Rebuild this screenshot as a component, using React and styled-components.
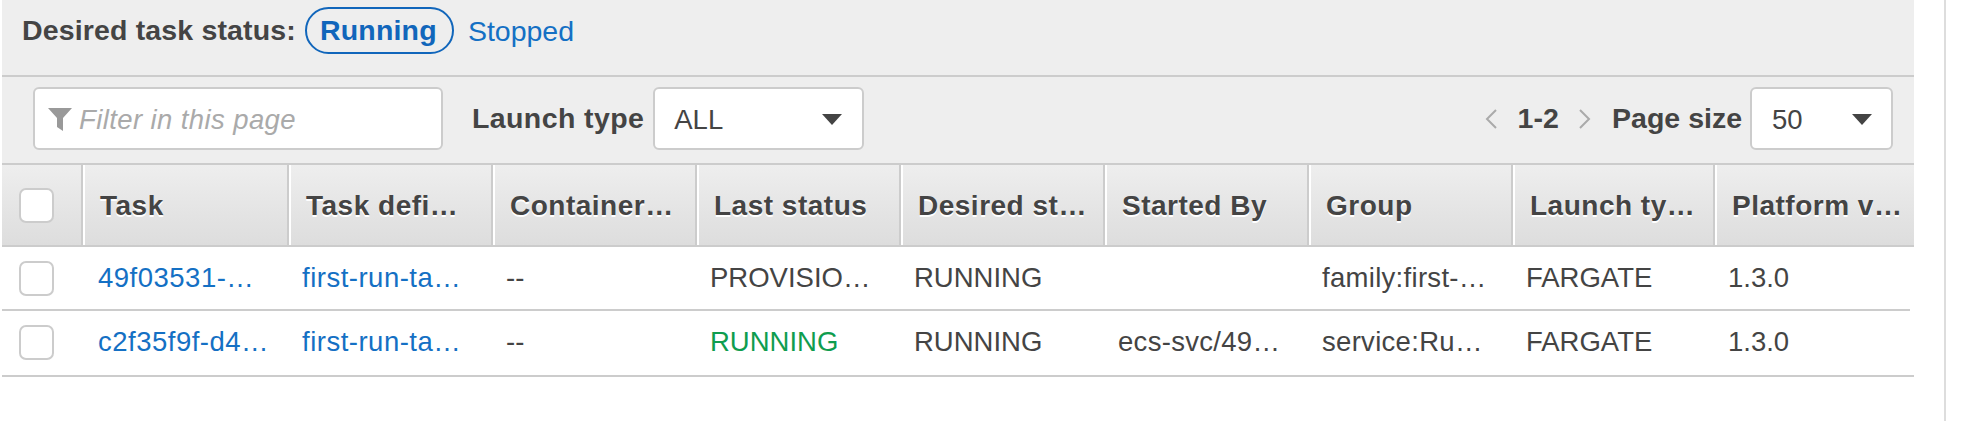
import React from "react";
import styled, { createGlobalStyle } from "styled-components";

const GlobalStyle = createGlobalStyle`
  html, body { margin: 0; background: #fff; }
  body { font-family: "Liberation Sans", Arial, sans-serif; color: #444; }
`;

const Page = styled.div`
  display: flex;
  height: 421px;
  padding-left: 2px;
  box-sizing: border-box;
  overflow: hidden;
`;

const Panel = styled.div`
  width: 1912px;
  flex: none;
`;

const Rail = styled.div`
  width: 2px;
  margin-left: 30px;
  background: #ddd;
`;

const StatusBar = styled.div`
  display: flex;
  align-items: center;
  height: 61px;
  padding: 0 0 14px 20px;
  background: #eee;
  border-bottom: 2px solid #ccc;
`;

const BoldLabel = styled.span`
  font-size: 28.5px;
  font-weight: 700;
  letter-spacing: 0.15px;
  color: #444;
  white-space: nowrap;
`;

const StatusPill = styled.span`
  display: flex;
  align-items: center;
  justify-content: center;
  box-sizing: border-box;
  width: 149px;
  height: 47px;
  margin: 0 14px 0 9px;
  padding-right: 2px;
  border: 2px solid #1166bb;
  border-radius: 24px;
  font-size: 28.5px;
  font-weight: 700;
  letter-spacing: 0.2px;
  color: #1166bb;
`;

const StatusLink = styled.a`
  padding-top: 1px;
  font-size: 28.5px;
  color: #1470c4;
`;

const Toolbar = styled.div`
  display: flex;
  align-items: center;
  height: 83px;
  padding: 0 21px 3px 31px;
  background: #eee;
  border-bottom: 2px solid #ccc;
`;

const Field = styled.div`
  display: flex;
  align-items: center;
  box-sizing: border-box;
  height: 63px;
  width: ${(p) => p.$width}px;
  padding: 2px 0 0 ${(p) => p.$pad}px;
  background: #fff;
  border: 2px solid #ccc;
  border-radius: 6px;
  font-size: 27.5px;
  color: #444;
`;

const Placeholder = styled.span`
  margin-left: 7px;
  font-style: italic;
  letter-spacing: 0.4px;
  color: #aaa;
`;

const Caret = styled.span`
  margin-left: auto;
  margin-right: ${(p) => p.$right}px;
  width: 0;
  height: 0;
  border-left: 10px solid transparent;
  border-right: 10px solid transparent;
  border-top: 11px solid #444;
`;

const ToolbarLabel = styled(BoldLabel)`
  margin: 0 9px 0 29px;
  letter-spacing: 0.4px;
`;

const Pager = styled.div`
  display: flex;
  align-items: center;
  margin-left: auto;
`;

const PageRange = styled(BoldLabel)`
  margin: 0 20px;
`;

const SizeLabel = styled(BoldLabel)`
  margin: 0 8px 0 21px;
  letter-spacing: 0;
`;

const Grid = styled.div`
  display: grid;
  grid-template-columns: 81px 206px repeat(6, 204px) 202px ${(p) => (p.$short ? 195 : 199)}px;
  width: ${(p) => (p.$short ? 1908 : 1912)}px;
`;

const HeadRow = styled(Grid)`
  height: 80px;
  background: linear-gradient(#eee, #ddd);
  border-bottom: 2px solid #ccc;
`;

const BodyRow = styled(Grid)`
  height: ${(p) => p.$height}px;
  border-bottom: 2px solid #ccc;
`;

const HeadCell = styled.div`
  display: flex;
  align-items: center;
  box-sizing: border-box;
  min-width: 0;
  padding-left: 15px;
  border-left: 2px solid #fff;
  border-right: 2px solid #ccc;
  &:first-child { border-left: 0; padding-left: 17px; }
  &:last-child { border-right: 0; }
`;

const HeadText = styled.span`
  padding-top: 2px;
  font-size: 28px;
  font-weight: 700;
  letter-spacing: 0.5px;
  color: #444;
  white-space: nowrap;
  text-shadow: 0 2px 0 #fff;
`;

const Cell = styled.div`
  display: flex;
  align-items: center;
  min-width: 0;
  padding: 0 0 ${(p) => (p.$lift ? 2 : 0)}px ${(p) => p.$pad || 13}px;
  font-size: 27.5px;
  letter-spacing: ${(p) => (p.$link ? 0.5 : p.$spread ? 0.3 : 0)}px;
  white-space: nowrap;
  color: ${(p) => (p.$link ? "#1470c4" : p.$ok ? "#0f9d4f" : "#444")};
`;

const Checkbox = styled.span`
  display: block;
  box-sizing: border-box;
  width: 35px;
  height: 35px;
  background: #fff;
  border: 2px solid #ccc;
  border-radius: 7px;
`;

const FunnelIcon = () => (
  <svg width="24" height="23" viewBox="0 0 24 23">
    <path d="M0 0h24L15 10v13l-6-4V10z" fill="#999" />
  </svg>
);

const Chevron = ({ dir }) => (
  <svg width="12" height="20" viewBox="0 0 12 20" fill="none" stroke="#aaa" strokeWidth="2">
    <path d={dir === "left" ? "M11 1 2 10l9 9" : "M1 1l9 9-9 9"} />
  </svg>
);

const headers = [
  "Task",
  "Task defi…",
  "Container…",
  "Last status",
  "Desired st…",
  "Started By",
  "Group",
  "Launch ty…",
  "Platform v…",
];

const tasks = [
  {
    id: "49f03531-…",
    def: "first-run-ta…",
    last: "PROVISIO…",
    started: "",
    group: "family:first-…",
    height: 62,
    short: true,
  },
  {
    id: "c2f35f9f-d4…",
    def: "first-run-ta…",
    last: "RUNNING",
    ok: true,
    started: "ecs-svc/49…",
    group: "service:Ru…",
    height: 64,
    lift: true,
  },
];

export default function App() {
  return (
    <Page>
      <GlobalStyle />
      <Panel>
        <StatusBar>
          <BoldLabel>Desired task status:</BoldLabel>
          <StatusPill>Running</StatusPill>
          <StatusLink>Stopped</StatusLink>
        </StatusBar>
        <Toolbar>
          <Field $width={410} $pad={13}>
            <FunnelIcon />
            <Placeholder>Filter in this page</Placeholder>
          </Field>
          <ToolbarLabel>Launch type</ToolbarLabel>
          <Field $width={211} $pad={19}>
            ALL
            <Caret $right={20} />
          </Field>
          <Pager>
            <Chevron dir="left" />
            <PageRange>1-2</PageRange>
            <Chevron dir="right" />
            <SizeLabel>Page size</SizeLabel>
            <Field $width={143} $pad={20}>
              50
              <Caret $right={19} />
            </Field>
          </Pager>
        </Toolbar>
        <HeadRow>
          <HeadCell>
            <Checkbox />
          </HeadCell>
          {headers.map((h) => (
            <HeadCell key={h}>
              <HeadText>{h}</HeadText>
            </HeadCell>
          ))}
        </HeadRow>
        {tasks.map((t) => (
          <BodyRow key={t.id} $height={t.height} $short={t.short}>
            <Cell $pad={17} $lift={t.lift}>
              <Checkbox />
            </Cell>
            <Cell $pad={15} $link $lift={t.lift}>{t.id}</Cell>
            <Cell $link $lift={t.lift}>{t.def}</Cell>
            <Cell $lift={t.lift}>--</Cell>
            <Cell $ok={t.ok} $lift={t.lift}>{t.last}</Cell>
            <Cell $lift={t.lift}>RUNNING</Cell>
            <Cell $spread $lift={t.lift}>{t.started}</Cell>
            <Cell $spread $lift={t.lift}>{t.group}</Cell>
            <Cell $lift={t.lift}>FARGATE</Cell>
            <Cell $lift={t.lift}>1.3.0</Cell>
          </BodyRow>
        ))}
      </Panel>
      <Rail />
    </Page>
  );
}
